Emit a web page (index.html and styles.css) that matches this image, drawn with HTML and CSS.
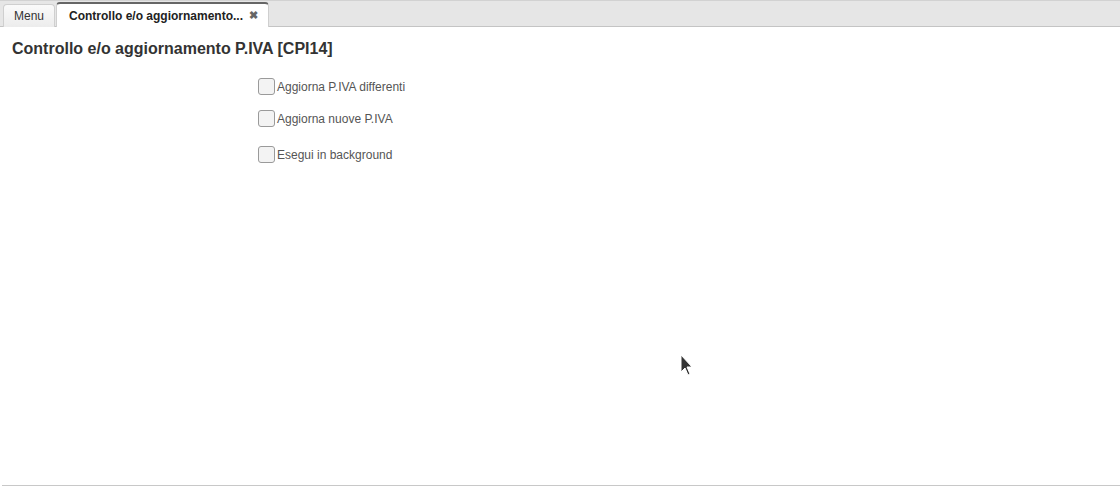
FILE: index.html
```html
<!DOCTYPE html>
<html>
<head>
<meta charset="utf-8">
<link rel="stylesheet" href="styles.css">
</head>
<body>
<div class="app">
  <div class="tabbar">
    <div class="tab">Menu</div>
    <div class="tab active">Controllo e/o aggiornamento... <span class="close">&#10006;</span></div>
  </div>
  <div class="content">
    <h1 class="title">Controllo e/o aggiornamento P.IVA [CPI14]</h1>
    <div class="form">
      <label class="check r1"><span class="box"></span>Aggiorna P.IVA differenti</label>
      <label class="check r2"><span class="box"></span>Aggiorna nuove P.IVA</label>
      <label class="check r3"><span class="box"></span>Esegui in background</label>
    </div>
  </div>
  <div class="footer"></div>
  <svg class="cursor" width="14" height="22" viewBox="0 0 14 22"><path d="M1 1 L1 18 L5 14 L8 21 L10 20 L7 13 L12 13 Z" fill="#333" stroke="#fff" stroke-width="1"/></svg>
</div>
</body>
</html>
```
FILE: styles.css
```css
html, body { margin: 0; padding: 0; background: #fff; }
body { font-family: "Liberation Sans", Arial, sans-serif; }
.app { position: relative; width: 1120px; height: 487px; display: flex; flex-direction: column; }
.tabbar {
  height: 27px; background: #e6e6e6; border-top: 1px solid #d2d2d2; border-bottom: 1px solid #c4c4c4;
  display: flex; align-items: flex-end; padding-left: 3px; gap: 1px; box-sizing: border-box;
}
.tab {
  height: 23px; box-sizing: border-box; padding: 0 10px; font-size: 12px; color: #333;
  display: flex; align-items: center; background: linear-gradient(#fafafa, #ececec);
  border: 1px solid #cfcfcf; border-bottom: none; border-radius: 4px 4px 0 0; margin-bottom: -1px;
}
.tab.active {
  background: #fff; font-weight: bold; color: #222; padding: 0 10px 0 12px;
  border-top: 2px solid #666; border-color: #666 #cfcfcf #cfcfcf; height: 25px; margin-bottom: -1px;
}
.close { font-size: 11px; color: #666; margin-left: 6px; }
.content { flex: 1; padding: 13px 12px 0; }
.title { margin: 0; font-size: 16px; font-weight: bold; color: #333; line-height: 17px; }
.form { padding-left: 246px; padding-top: 21px; display: flex; flex-direction: column; }
.check { display: flex; align-items: center; font-size: 12px; color: #555; height: 17px; }
.r2 { margin-top: 15px; }
.r3 { margin-top: 19px; }
.box {
  border: 1px solid #9a9a9a; border-radius: 3px; background: #f3f3f3;
  margin-right: 2px; box-sizing: border-box; width: 17px; height: 17px;
}
.footer { height: 1px; background: #c8c8c8; margin: 0 0 1px 2px; }
.cursor { position: absolute; left: 680px; top: 354px; }
```
